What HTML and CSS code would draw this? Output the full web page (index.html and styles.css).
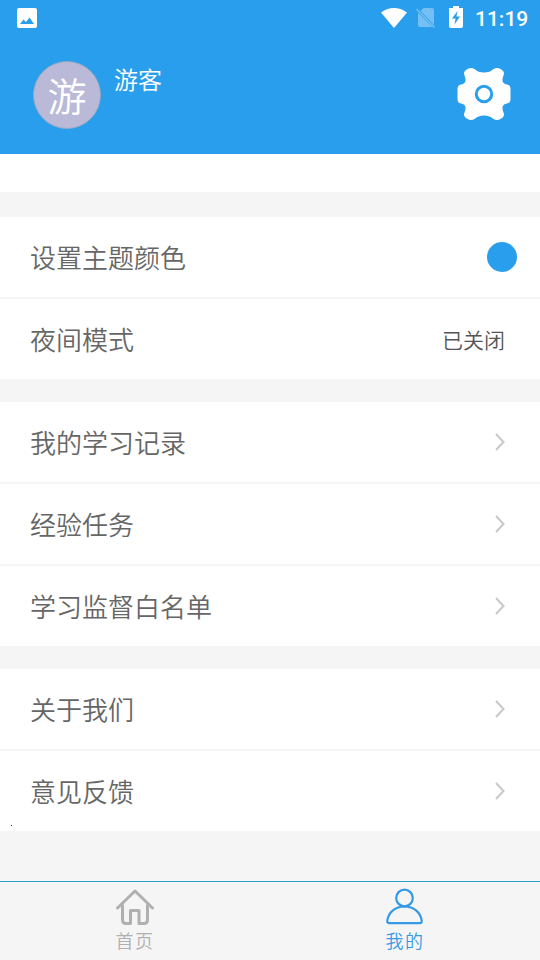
FILE: index.html
```html
<!DOCTYPE html>
<html lang="zh-CN">
<head>
<meta charset="utf-8">
<title>我的</title>
<link rel="stylesheet" href="styles.css">
</head>
<body>
<div class="app">
  <header class="header">
    <div class="status">
      <svg class="status-photo" width="20" height="20" viewBox="0 0 20 20"><rect width="20" height="20" rx="2" fill="#fff"/><path d="M3 16l3.500-4.500 2.500 2.500 3.500-4.500L17 16z" fill="#299eec"/></svg>
      <svg class="status-wifi" width="26" height="20" viewBox="0 0 26 20"><path d="M0 4.500Q13-4.300 26 4.500L13 20z" fill="#fff"/></svg>
      <svg class="status-sim" width="20" height="20" viewBox="0 0 20 20"><path d="M7.500 0H16q2 0 2 2v15L4.500 3zM2 4.500L16.500 19H4q-2 0-2-2z" fill="#74bff3"/><path d="M.5 1l18 18.500" stroke="#74bff3" stroke-width="1.500"/></svg>
      <svg class="status-battery" width="14" height="22" viewBox="0 0 14 22"><path d="M4 0h6v2h4v18q0 2-2 2H2q-2 0-2-2V2h4z" fill="#fff"/><path d="M8.500 5L3 12.500h3.500L5.500 18.500l5.500-8H7.500z" fill="#299eec"/></svg>
      <span class="clock">11:19</span>
    </div>
    <div class="profile">
      <div class="avatar">游</div>
      <div class="name">游客</div>
      <svg class="gear" width="54" height="54" viewBox="-27 -27 54 54"><path d="M-16.500-25Q-13-27-9.500-25Q-6-21.500 0-21.500Q6-21.500 9.500-25Q13-27 16.500-25Q21.500-22.500 19.300-18Q16.500-10.500 23-9.500Q26.500-9 26.500-5V5Q26.500 9 23 9.500Q16.500 10.500 19.300 18Q21.500 22.500 16.500 25Q13 27 9.500 25Q6 21.500 0 21.500Q-6 21.500-9.500 25Q-13 27-16.500 25Q-21.500 22.500-19.300 18Q-16.500 10.500-23 9.500Q-26.500 9-26.500 5V-5Q-26.500-9-23-9.500Q-16.500-10.500-19.300-18Q-21.500-22.500-16.500-25z" fill="#fff"/><circle r="7.700" fill="none" stroke="#299eec" stroke-width="3"/></svg>
    </div>
  </header>
  <main class="content">
    <div class="blank"></div>
    <section class="group first">
      <div class="row"><span class="label">设置主题颜色</span><i class="swatch"></i></div>
      <div class="row"><span class="label">夜间模式</span><span class="value">已关闭</span></div>
    </section>
    <section class="group">
      <div class="row"><span class="label">我的学习记录</span><svg class="chevron" viewBox="0 0 12 20"><path d="M2 2l7.500 8L2 18"/></svg></div>
      <div class="row"><span class="label">经验任务</span><svg class="chevron" viewBox="0 0 12 20"><path d="M2 2l7.500 8L2 18"/></svg></div>
      <div class="row"><span class="label">学习监督白名单</span><svg class="chevron" viewBox="0 0 12 20"><path d="M2 2l7.500 8L2 18"/></svg></div>
    </section>
    <section class="group last">
      <div class="row"><span class="label">关于我们</span><svg class="chevron" viewBox="0 0 12 20"><path d="M2 2l7.500 8L2 18"/></svg></div>
      <div class="row"><span class="label">意见反馈</span><svg class="chevron" viewBox="0 0 12 20"><path d="M2 2l7.500 8L2 18"/></svg></div>
      <i class="dot"></i>
    </section>
  </main>
  <nav class="tabs">
    <div class="tab">
      <svg width="40" height="38" viewBox="0 0 40 38" fill="none" stroke="currentColor" stroke-width="3" stroke-linecap="round" stroke-linejoin="round"><path d="M2.500 20L20 3l17.500 17M7.500 17v15q0 3.500 3.500 3.500h4.500V22.500h8.500v13h5q3.500 0 3.500-3.500V17"/></svg>
      <span>首页</span>
    </div>
    <div class="tab active">
      <svg width="40" height="38" viewBox="0 0 40 38" fill="none" stroke="currentColor" stroke-width="2.200"><circle cx="19.500" cy="10" r="8.300"/><path d="M4 35.200Q2 35.200 2.300 32.500C3.500 24 10.500 18.500 19.500 18.500S35.500 24 36.700 32.500Q37 35.200 35 35.200z"/></svg>
      <span>我的</span>
    </div>
  </nav>
</div>
</body>
</html>
```
FILE: styles.css
```css
* { box-sizing: border-box; }
body {
  margin: 0;
  font-family: "Noto Sans CJK SC", sans-serif;
  font-weight: 350;
  color: #666;
}
svg { display: block; flex: none; }
.app {
  width: 540px;
  height: 960px;
  display: flex;
  flex-direction: column;
  background: #f5f5f5;
  overflow: hidden;
}
.header { height: 154px; flex: none; background: #299eec; color: #fff; }
.status {
  height: 36px;
  display: flex;
  align-items: center;
  padding: 0 12px 0 17px;
}
.status-wifi { margin-left: auto; }
.status-sim { margin-left: 9px; }
.status-battery { margin: -2px 12px 0 13px; }
.clock {
  font: 500 21px/36px Roboto, sans-serif;
  width: 53px;
  white-space: nowrap;
  padding-top: 2px;
}
.profile { display: flex; padding: 25px 29.500px 0 33px; }
.avatar {
  width: 68px;
  height: 68px;
  border-radius: 50%;
  background: #bbb9d8;
  border: 1px solid #91aac4;
  font-size: 39px;
  line-height: 64px;
  text-align: center;
}
.name { margin-left: 13px; font-size: 24px; line-height: 36px; }
.gear { margin: 6px 0 0 auto; }
.blank { height: 38px; background: #fff; }
.group {
  position: relative;
  display: flex;
  flex-direction: column;
  gap: 2px;
  margin-top: 23px;
}
.first { margin-top: 25px; }
.row {
  height: 80px;
  background: #fff;
  padding: 0 34px 0 30px;
  display: flex;
  align-items: center;
  justify-content: space-between;
  font-size: 26px;
  line-height: 38px;
}
.value { font-size: 21px; margin-right: 1px; color: #555; }
.swatch { width: 30px; height: 30px; border-radius: 50%; background: #299eec; margin-right: -11px; }
.chevron {
  width: 12px;
  height: 20px;
  fill: none;
  stroke: #c8c8c8;
  stroke-width: 2;
}
.dot { position: absolute; left: 11px; bottom: 5px; width: 1px; height: 1px; background: #333; }
.tabs {
  height: 79px;
  margin-top: auto;
  border-top: 1px solid #2c9fc9;
  display: flex;
}
.tab {
  flex: 1;
  display: flex;
  flex-direction: column;
  align-items: center;
  padding-top: 6px;
  color: #b0b0b0;
  font: 18px/28px "AR PL UKai CN", KaiTi, "Noto Sans CJK SC", serif;
  font-weight: 350;
  letter-spacing: 1.500px;
}
.active { color: #3599e5; }
```
